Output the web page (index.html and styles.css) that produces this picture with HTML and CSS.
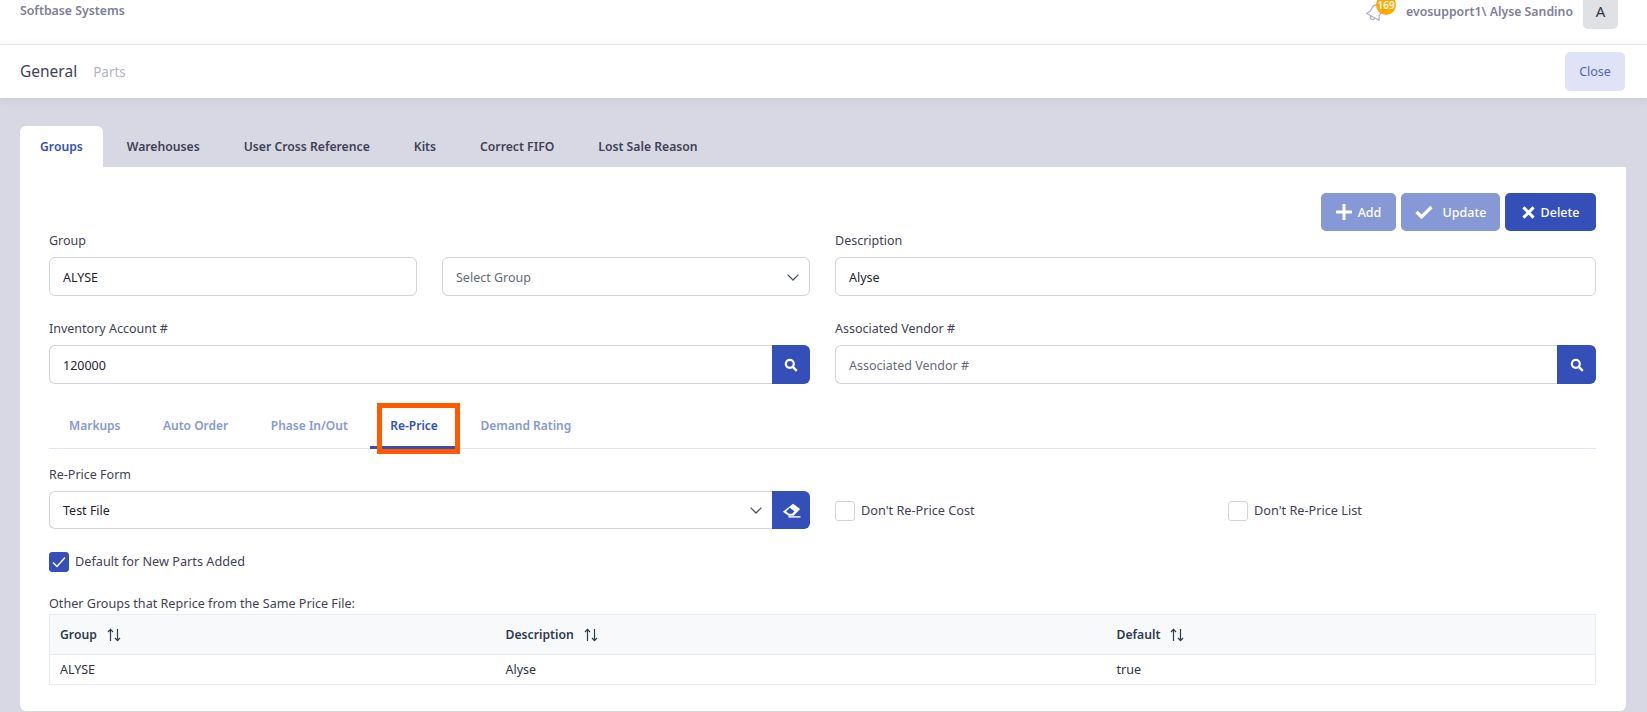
FILE: index.html
```html
<!DOCTYPE html>
<html lang="en">
<head>
<meta charset="utf-8">
<title>General - Parts</title>
<link rel="stylesheet" href="styles.css">
</head>
<body>
<header class="topbar">
  <div class="brand">Softbase Systems</div>
  <div class="user">
    <div class="bell">
      <svg class="bell-icon" viewBox="0 0 20 20" width="22" height="22" fill="none" stroke="#aab0c0" stroke-width="1.100" stroke-linejoin="round"><g transform="rotate(28 10 10)"><path d="M10 2.500c-3 0-4.600 2.200-4.600 5v3.200L3.600 14h12.800l-1.800-3.300V7.500c0-2.800-1.600-5-4.600-5z"/><path d="M8 14.300c0 1.300.9 2.200 2 2.200s2-.9 2-2.200"/></g></svg>
      <span class="badge">169</span>
    </div>
    <span class="user-name">evosupport1\ Alyse Sandino</span>
    <div class="avatar">A</div>
  </div>
</header>
<section class="subbar">
  <div class="crumbs"><span class="crumb-main">General</span><span class="crumb-sub">Parts</span></div>
  <button class="btn-close">Close</button>
</section>
<main class="content">
  <nav class="tabs">
    <a class="tab tab-active">Groups</a>
    <a class="tab">Warehouses</a>
    <a class="tab">User Cross Reference</a>
    <a class="tab">Kits</a>
    <a class="tab">Correct FIFO</a>
    <a class="tab">Lost Sale Reason</a>
  </nav>
  <div class="card">
    <div class="toolbar">
      <button class="btn btn-muted btn-add"><svg class="ico" viewBox="0 0 16 16" width="16" height="16"><path d="M6.500 0h3v6.500H16v3H9.500V16h-3V9.500H0v-3h6.500z" fill="#fff"/></svg>Add</button>
      <button class="btn btn-muted btn-update"><svg class="ico" viewBox="0 0 18 14" width="18" height="14"><path d="M1.500 7l5 5L16.500 2" fill="none" stroke="#fff" stroke-width="3.200"/></svg>Update</button>
      <button class="btn btn-solid btn-delete"><svg class="ico" viewBox="0 0 14 14" width="13" height="13"><path d="M1.500 1.500l11 11M12.500 1.500l-11 11" fill="none" stroke="#fff" stroke-width="3.200"/></svg>Delete</button>
    </div>
    <div class="form-grid">
      <div class="split">
        <div class="field">
          <label class="label">Group</label>
          <div class="control value">ALYSE</div>
        </div>
        <div class="field">
          <span class="label label-blank"></span>
          <div class="control select placeholder">Select Group<svg class="chev" viewBox="0 0 12 7" width="12" height="7"><path d="M.6.6L6 6l5.400-5.400" fill="none" stroke="#4a5568" stroke-width="1.300"/></svg></div>
        </div>
      </div>
      <div class="field">
        <label class="label">Description</label>
        <div class="control value">Alyse</div>
      </div>
      <div class="field">
        <label class="label">Inventory Account #</label>
        <div class="group">
          <div class="control control-join value">120000</div>
          <button class="icon-btn"><svg viewBox="0 0 14 14" width="14" height="14"><circle cx="5.800" cy="5.800" r="4" fill="none" stroke="#fff" stroke-width="2.200"/><path d="M8.800 8.800l4 4" stroke="#fff" stroke-width="2.400"/></svg></button>
        </div>
      </div>
      <div class="field">
        <label class="label">Associated Vendor #</label>
        <div class="group">
          <div class="control control-join placeholder">Associated Vendor #</div>
          <button class="icon-btn icon-btn-wide"><svg viewBox="0 0 14 14" width="14" height="14"><circle cx="5.800" cy="5.800" r="4" fill="none" stroke="#fff" stroke-width="2.200"/><path d="M8.800 8.800l4 4" stroke="#fff" stroke-width="2.400"/></svg></button>
        </div>
      </div>
    </div>
    <nav class="subtabs">
      <a class="subtab">Markups</a>
      <a class="subtab">Auto Order</a>
      <a class="subtab">Phase In/Out</a>
      <a class="subtab subtab-active">Re-Price<span class="highlight"></span></a>
      <a class="subtab">Demand Rating</a>
    </nav>
    <div class="reprice">
      <div class="field">
        <label class="label">Re-Price Form</label>
        <div class="group group-short">
          <div class="control control-join select value">Test File<svg class="chev" viewBox="0 0 12 7" width="12" height="7"><path d="M.6.6L6 6l5.400-5.400" fill="none" stroke="#4a5568" stroke-width="1.300"/></svg></div>
          <button class="icon-btn"><svg viewBox="0 0 18 14" width="19" height="15"><path d="M10.500.6L17.200 5.600 11 12H6.200L.8 8.300z" fill="#fff"/><path d="M3.900 8l3.500-3.600 4.400 3.300-2.300 2.400H6.600z" fill="#3450b8"/><path d="M6 12.400h11.500v1.300H6z" fill="#fff"/></svg></button>
        </div>
      </div>
      <div class="checks">
        <label class="check"><span class="box"></span>Don't Re-Price Cost</label>
        <label class="check"><span class="box"></span>Don't Re-Price List</label>
      </div>
    </div>
    <label class="check check-default"><span class="box box-on"><svg viewBox="0 0 14 12" width="14" height="12"><path d="M1 6.500l4 4L13 1.500" fill="none" stroke="#fff" stroke-width="1.500"/></svg></span>Default for New Parts Added</label>
    <p class="table-title">Other Groups that Reprice from the Same Price File:</p>
    <table class="grid">
      <thead>
        <tr>
          <th class="col-a">Group<svg class="sort" viewBox="0 0 14 14" width="14" height="14"><path d="M3.500 13V1.500M1 4l2.500-2.700L6 4M10.500 1v11.500M8 10l2.500 2.700L13 10" fill="none" stroke="#2d3b52" stroke-width="1.200"/></svg></th>
          <th class="col-b">Description<svg class="sort" viewBox="0 0 14 14" width="14" height="14"><path d="M3.500 13V1.500M1 4l2.500-2.700L6 4M10.500 1v11.500M8 10l2.500 2.700L13 10" fill="none" stroke="#2d3b52" stroke-width="1.200"/></svg></th>
          <th class="col-c">Default<svg class="sort" viewBox="0 0 14 14" width="14" height="14"><path d="M3.500 13V1.500M1 4l2.500-2.700L6 4M10.500 1v11.500M8 10l2.500 2.700L13 10" fill="none" stroke="#2d3b52" stroke-width="1.200"/></svg></th>
        </tr>
      </thead>
      <tbody>
        <tr><td>ALYSE</td><td>Alyse</td><td>true</td></tr>
      </tbody>
    </table>
  </div>
</main>
</body>
</html>
```
FILE: styles.css
```css
* { box-sizing: border-box; }
html, body { margin: 0; height: 712px; overflow: hidden; }
body {
  font-family: "Noto Sans", "Open Sans", sans-serif;
  font-size: 13px;
  color: #3f4254;
  background: #d8d8e4;
}
button { font-family: inherit; border: 0; cursor: pointer; }

.topbar {
  height: 45px;
  background: #fff;
  border-bottom: 1px solid #ebebf3;
  display: flex;
  justify-content: space-between;
  align-items: flex-start;
  padding: 0 29px 0 20px;
}
.brand { font-size: 12.300px; font-weight: 600; color: #7e7e98; line-height: 22px; }
.user { display: flex; align-items: flex-start; }
.bell { position: relative; width: 42px; height: 24px; }
.bell-icon { position: absolute; left: 0; top: 2px; }
.badge {
  position: absolute;
  left: 12px;
  top: -5px;
  width: 20px;
  height: 20px;
  border-radius: 50%;
  background: #ffa800;
  color: #fff;
  font-size: 10px;
  font-weight: 600;
  line-height: 20px;
  text-align: center;
}
.user-name { font-size: 12.300px; font-weight: 600; color: #7e7e98; line-height: 23px; margin-right: 10px; }
.avatar {
  width: 35px;
  height: 29px;
  background: #dfe1e5;
  border-radius: 0 0 5px 5px;
  color: #2f3445;
  font-size: 15px;
  line-height: 23px;
  text-align: center;
}

.subbar {
  height: 53px;
  background: #fff;
  display: flex;
  justify-content: space-between;
  align-items: center;
  padding: 0 22px 0 20px;
  box-shadow: 0 2px 10px rgba(60, 60, 100, .08);
  position: relative;
}
.crumbs { margin-top: -2px; }
.crumb-main { font-size: 15.500px; color: #3f4254; }
.crumb-sub { font-size: 13.500px; color: #b5b5c3; margin-left: 16px; }
.btn-close {
  width: 60px;
  height: 39px;
  background: #dfe3f5;
  color: #4f63bb;
  font-size: 12.500px;
  border-radius: 5px;
}

.content { padding: 28px 21px 0 20px; }
.tabs { display: flex; height: 41px; gap: 4px; }
.tab {
  font-size: 12.200px;
  font-weight: 600;
  color: #3f4254;
  line-height: 41px;
  padding: 0 20px;
  white-space: nowrap;
}
.tab-active {
  background: #fff;
  color: #3450b8;
  border-radius: 6px 6px 0 0;
}
.card {
  background: #fff;
  height: 544px;
  border-radius: 0 0 6px 6px;
  padding: 26px 30px 0 29px;
}
.toolbar { display: flex; justify-content: flex-end; gap: 5px; height: 38px; }
.btn {
  height: 38px;
  color: #fff;
  font-size: 12.500px;
  font-weight: 500;
  border-radius: 5px;
  display: flex;
  align-items: center;
  justify-content: center;
  padding: 0;
}
.ico { margin-right: 6px; }
.btn-add { width: 75px; }
.btn-update { width: 99px; }
.btn-update .ico { margin-right: 10px; }
.btn-delete { width: 91px; }
.btn-muted { background: #8698d6; }
.btn-solid { background: #3450b8; }

.form-grid {
  display: grid;
  grid-template-columns: 1fr 1fr;
  column-gap: 25px;
  row-gap: 23px;
}
.split { display: grid; grid-template-columns: 1fr 1fr; column-gap: 25px; }
.label {
  display: block;
  height: 18px;
  line-height: 20px;
  margin-bottom: 8px;
  font-size: 12.500px;
  color: #3f4254;
}
.control {
  height: 39px;
  border: 1px solid #d3d3d8;
  border-radius: 6px;
  padding: 2px 10px 0 13px;
  display: flex;
  align-items: center;
  justify-content: space-between;
  font-size: 12.500px;
  background: #fff;
}
.value { color: #1f2433; }
.placeholder { color: #666b78; }
.group { display: flex; }
.control-join { flex: 1; border-right: 0; border-radius: 6px 0 0 6px; }
.icon-btn {
  width: 38px;
  height: 39px;
  background: #3450b8;
  border-radius: 0 6px 6px 0;
  display: flex;
  align-items: center;
  justify-content: center;
  padding: 0;
}
.icon-btn-wide { width: 39px; }
.group-short .control, .group-short .icon-btn { height: 38px; }
.group-short .control { padding-top: 0; }

.subtabs {
  display: flex;
  gap: 2.500px;
  height: 46px;
  margin-top: 19px;
  border-bottom: 1px solid #e4e4f2;
}
.subtab {
  position: relative;
  font-size: 12px;
  font-weight: 600;
  color: #8698d6;
  line-height: 45px;
  padding: 0 20px;
  height: 46px;
  white-space: nowrap;
}
.subtab-active {
  color: #3450b8;
  border-bottom: 3px solid #3450b8;
}
.highlight {
  position: absolute;
  left: 7px;
  right: -2px;
  top: 0;
  height: 51px;
  border: 5px solid #ff5a00;
}

.reprice {
  display: grid;
  grid-template-columns: 1fr 1fr;
  column-gap: 25px;
  margin-top: 16px;
}
.checks { display: grid; grid-template-columns: 1fr 1fr; column-gap: 25px; padding-top: 36px; }
.check {
  display: flex;
  align-items: flex-start;
  height: 20px;
  font-size: 12.700px;
  line-height: 18px;
  color: #3f4254;
}
.box {
  width: 20px;
  height: 20px;
  border: 1px solid #d3d3d8;
  border-radius: 3px;
  margin-right: 6px;
  background: #fff;
  display: flex;
  align-items: center;
  justify-content: center;
}
.box-on { background: #3450b8; border-color: #3450b8; }
.check-default { margin-top: 23px; }
.table-title { margin: 23px 0 0; height: 19px; line-height: 18px; font-size: 12.600px; color: #3f4254; }

.grid {
  width: 100%;
  table-layout: fixed;
  border-collapse: collapse;
  font-size: 12.500px;
  border: 1px solid #e9ecef;
}
.grid th {
  height: 40px;
  background: #f8f9fa;
  color: #2d3b52;
  font-size: 12.200px;
  font-weight: 600;
  text-align: left;
  padding: 0 10px;
  border-bottom: 1px solid #e9ecef;
}
.grid td { height: 30px; color: #2f3445; padding: 0 10px; border-bottom: 1px solid #e9ecef; }
.col-a { width: 446px; }
.col-b { width: 611px; }
.sort { margin-left: 10px; vertical-align: -3px; }
```
